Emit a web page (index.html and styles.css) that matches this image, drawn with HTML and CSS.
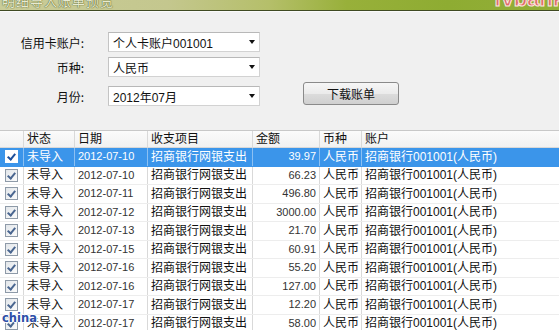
FILE: index.html
```html
<!DOCTYPE html>
<html lang="zh">
<head>
<meta charset="utf-8">
<title>信用卡账单导入</title>
<link rel="stylesheet" href="styles.css">
</head>
<body>
<div class="window">
  <div class="titlebar">
    <span class="title-text">明细导入账单预览</span>
    <span class="brand">fvbank</span>
  </div>
  <div class="title-line"></div>

  <div class="form">
    <div class="form-row r1">
      <label class="lbl">信用卡账户:</label>
      <div class="combo"><span class="combo-text">个人卡账户001001</span><span class="arrow"></span></div>
    </div>
    <div class="form-row r2">
      <label class="lbl">币种:</label>
      <div class="combo"><span class="combo-text">人民币</span><span class="arrow"></span></div>
    </div>
    <div class="form-row r3">
      <label class="lbl">月份:</label>
      <div class="combo"><span class="combo-text">2012年07月</span><span class="arrow"></span></div>
      <button class="btn">下载账单</button>
    </div>
  </div>

  <div class="grid">
    <div class="row head">
      <div class="c c0"></div>
      <div class="c c1">状态</div>
      <div class="c c2">日期</div>
      <div class="c c3">收支项目</div>
      <div class="c c4">金额</div>
      <div class="c c5">币种</div>
      <div class="c c6">账户</div>
    </div>
    <div class="row sel">
      <div class="c c0"><span class="chk"></span></div>
      <div class="c c1">未导入</div>
      <div class="c c2 num">2012-07-10</div>
      <div class="c c3">招商银行网银支出</div>
      <div class="c c4 num">39.97</div>
      <div class="c c5">人民币</div>
      <div class="c c6">招商银行001001(人民币)</div>
    </div>
    <div class="row">
      <div class="c c0"><span class="chk"></span></div>
      <div class="c c1">未导入</div>
      <div class="c c2 num">2012-07-10</div>
      <div class="c c3">招商银行网银支出</div>
      <div class="c c4 num">66.23</div>
      <div class="c c5">人民币</div>
      <div class="c c6">招商银行001001(人民币)</div>
    </div>
    <div class="row">
      <div class="c c0"><span class="chk"></span></div>
      <div class="c c1">未导入</div>
      <div class="c c2 num">2012-07-11</div>
      <div class="c c3">招商银行网银支出</div>
      <div class="c c4 num">496.80</div>
      <div class="c c5">人民币</div>
      <div class="c c6">招商银行001001(人民币)</div>
    </div>
    <div class="row">
      <div class="c c0"><span class="chk"></span></div>
      <div class="c c1">未导入</div>
      <div class="c c2 num">2012-07-12</div>
      <div class="c c3">招商银行网银支出</div>
      <div class="c c4 num">3000.00</div>
      <div class="c c5">人民币</div>
      <div class="c c6">招商银行001001(人民币)</div>
    </div>
    <div class="row">
      <div class="c c0"><span class="chk"></span></div>
      <div class="c c1">未导入</div>
      <div class="c c2 num">2012-07-13</div>
      <div class="c c3">招商银行网银支出</div>
      <div class="c c4 num">21.70</div>
      <div class="c c5">人民币</div>
      <div class="c c6">招商银行001001(人民币)</div>
    </div>
    <div class="row">
      <div class="c c0"><span class="chk"></span></div>
      <div class="c c1">未导入</div>
      <div class="c c2 num">2012-07-15</div>
      <div class="c c3">招商银行网银支出</div>
      <div class="c c4 num">60.91</div>
      <div class="c c5">人民币</div>
      <div class="c c6">招商银行001001(人民币)</div>
    </div>
    <div class="row">
      <div class="c c0"><span class="chk"></span></div>
      <div class="c c1">未导入</div>
      <div class="c c2 num">2012-07-16</div>
      <div class="c c3">招商银行网银支出</div>
      <div class="c c4 num">55.20</div>
      <div class="c c5">人民币</div>
      <div class="c c6">招商银行001001(人民币)</div>
    </div>
    <div class="row">
      <div class="c c0"><span class="chk"></span></div>
      <div class="c c1">未导入</div>
      <div class="c c2 num">2012-07-16</div>
      <div class="c c3">招商银行网银支出</div>
      <div class="c c4 num">127.00</div>
      <div class="c c5">人民币</div>
      <div class="c c6">招商银行001001(人民币)</div>
    </div>
    <div class="row">
      <div class="c c0"><span class="chk"></span></div>
      <div class="c c1">未导入</div>
      <div class="c c2 num">2012-07-17</div>
      <div class="c c3">招商银行网银支出</div>
      <div class="c c4 num">12.20</div>
      <div class="c c5">人民币</div>
      <div class="c c6">招商银行001001(人民币)</div>
    </div>
    <div class="row">
      <div class="c c0"><span class="chk"></span></div>
      <div class="c c1">未导入</div>
      <div class="c c2 num">2012-07-17</div>
      <div class="c c3">招商银行网银支出</div>
      <div class="c c4 num">58.00</div>
      <div class="c c5">人民币</div>
      <div class="c c6">招商银行001001(人民币)</div>
    </div>
  </div>
  <span class="watermark">china</span>
</div>
</body>
</html>
```

FILE: styles.css
```css
html, body {
  margin: 0;
  padding: 0;
}
body {
  width: 559px;
  height: 330px;
  overflow: hidden;
  background: #f0f0f0;
  font-family: "Liberation Sans", "Noto Sans CJK SC", sans-serif;
  font-size: 12px;
  color: #111;
}
.window {
  position: relative;
  width: 559px;
  height: 330px;
  overflow: hidden;
}
.titlebar {
  height: 10px;
  overflow: hidden;
  position: relative;
  background: linear-gradient(90deg, #c9cc98 0%, #c4c78e 30%, #b5bf6a 48%, #98b03a 62%, #8eac32 80%, #93ae38 100%);
  display: flex;
  justify-content: space-between;
}
.title-text {
  font-family: "Noto Sans CJK SC", sans-serif;
  font-size: 13px;
  line-height: 13px;
  margin-top: -6px;
  margin-left: 2px;
  color: #e8ead0;
  text-shadow: 0 0 1px #55602a, 0 0 1px #55602a;
  letter-spacing: 1px;
}
.brand {
  font-family: "Liberation Sans", sans-serif;
  font-weight: bold;
  font-size: 22px;
  line-height: 22px;
  margin-top: -12px;
  margin-right: -6px;
  color: #e06a6a;
  -webkit-text-stroke: 1px #fbe8e0;
}
.title-line {
  height: 1px;
  background: #3f4a22;
  border-bottom: 1px solid #fafafa;
}
.form {
  padding-top: 20px;
  display: flex;
  flex-direction: column;
}
.form-row {
  display: flex;
  align-items: center;
  height: 20px;
}
.r2 { margin-top: 5px; }
.r3 { margin-top: 9px; }
.lbl {
  width: 84px;
  text-align: right;
  font-family: "Noto Sans CJK SC", sans-serif;
  font-size: 12px;
  color: #111;
}
.combo {
  margin-left: 24px;
  width: 150px;
  height: 18px;
  background: #fff;
  border: 1px solid #d2d2d2;
  border-top-color: #b8b8b8;
  border-left-color: #c4c4c4;
  display: flex;
  align-items: center;
  justify-content: space-between;
}
.combo-text {
  padding-left: 4px;
  font-size: 12px;
  color: #111;
}
.arrow {
  width: 0;
  height: 0;
  border-left: 3.5px solid transparent;
  border-right: 3.5px solid transparent;
  border-top: 4px solid #111;
  margin-right: 4px;
}
.btn {
  margin-left: 43px;
  align-self: flex-start;
  margin-top: -4px;
  width: 96px;
  height: 23px;
  border: 1px solid #8a8a8a;
  border-radius: 3px;
  background: linear-gradient(#f6f6f6 0%, #ebebeb 50%, #dcdcdc 51%, #d0d0d0 100%);
  font-family: "Noto Sans CJK SC", sans-serif;
  font-size: 12px;
  color: #111;
  padding: 0;
}
.grid {
  margin-top: 24px;
  border-top: 1px solid #c8c8c8;
  background: #fff;
}
.row {
  display: grid;
  grid-template-columns: 24px 51px 73px 105px 67px 42px 1fr;
  height: 18.5px;
  border-bottom: 1px solid #ededed;
  box-sizing: border-box;
}
.row.head {
  height: 17px;
  background: linear-gradient(#fbfbfb, #f1f1f1);
  border-bottom: 1px solid #d8d8d8;
}
.c {
  border-right: 1px solid #d9d9d9;
  display: flex;
  align-items: center;
  padding-left: 3px;
  white-space: nowrap;
  overflow: hidden;
  line-height: 1;
}
.c0 { padding-left: 0; justify-content: center; }
.c6 { border-right: none; }
.num { color: #333; font-size: 11px; }
.c4 { justify-content: flex-end; padding-left: 0; padding-right: 3px; }
.head .c4 { justify-content: flex-start; padding-left: 3px; }
.head .c { color: #111; }
.chk {
  width: 11px;
  height: 11px;
  border: 1px solid #8e9aa8;
  background: linear-gradient(135deg, #e2e6ea, #fbfbfb);
  position: relative;
  box-sizing: content-box;
}
.chk::after {
  content: "";
  position: absolute;
  left: 3px;
  top: 1px;
  width: 3px;
  height: 6px;
  border-right: 2px solid #4a6690;
  border-bottom: 2px solid #4a6690;
  transform: rotate(40deg);
}
.row.sel {
  background: #3b95ea;
  border-bottom-color: #3b95ea;
}
.row.sel .c {
  color: #fff;
  border-right-color: #8cc0f2;
}
.row.sel .chk {
  background: #fff;
  border-color: #fff;
}
.row.sel .chk::after {
  border-color: #1d4f9a;
}
.watermark {
  position: absolute;
  left: 2px;
  top: 311px;
  font-family: "DejaVu Sans", sans-serif;
  font-weight: bold;
  font-size: 11.5px;
  color: #2e4fa8;
  text-shadow: 1px 0 0 #fff, -1px 0 0 #fff, 0 1px 0 #fff, 0 -1px 0 #fff;
}
```
